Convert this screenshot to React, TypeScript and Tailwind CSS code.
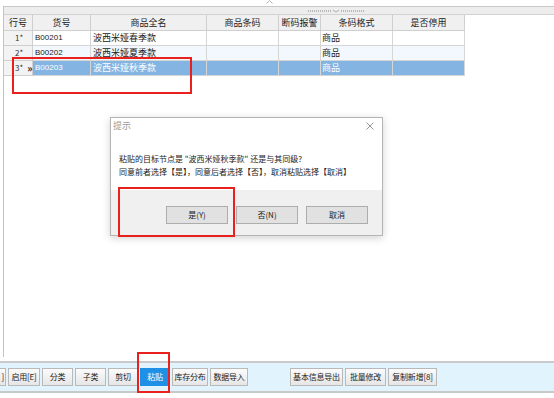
import React from 'react';

const cols = [29, 58, 116, 72, 42, 72, 72];
const headers = ['行号', '货号', '商品全名', '商品条码', '断码报警', '条码格式', '是否停用'];

const rows = [
  { no: '1*', code: 'B00201', name: '波西米娅春季款', fmt: '商品', bg: 'bg-white' },
  { no: '2*', code: 'B00202', name: '波西米娅夏季款', fmt: '商品', bg: 'bg-[#f3f8fe]' },
  { no: '3*', code: 'B00203', name: '波西米娅秋季款', fmt: '商品', bg: 'bg-[#84b4e1]', selected: true },
];

const tools = [
  { label: '启用[E]', w: 'w-[32px]' },
  { label: '分类', w: 'w-[31px]' },
  { label: '子类', w: 'w-[31px]' },
  { label: '剪切', w: 'w-[30px]' },
  { label: '粘贴', w: 'w-[30px]' },
  { label: '库存分布', w: 'w-[36px]' },
  { label: '数据导入', w: 'w-[38px]' },
];
const tools2 = [
  { label: '基本信息导出', w: 'w-[53px]' },
  { label: '批量修改', w: 'w-[41px]' },
  { label: '复制新增[8]', w: 'w-[49px]' },
];

function ToolButton({ label, active, className = '' }: { label: string; active?: boolean; className?: string }) {
  return (
    <div
      className={`h-[18px] flex items-center justify-center border text-[8px] whitespace-nowrap tracking-[-0.2px] ${
        active
          ? 'bg-[#1e90e6] border-[#1e90e6] text-white'
          : 'bg-gradient-to-b from-[#fbfbfb] to-[#e6e6e6] border-[#b9b9b9] text-[#222]'
      } ${className}`}
    >
      {label}
    </div>
  );
}

function DialogButton({ label }: { label: string }) {
  return (
    <div className="w-[62px] h-[18px] flex items-center justify-center bg-[#e1e1e1] border border-[#adadad] text-[8px] text-[#222]">
      {label}
    </div>
  );
}

export default function App() {
  const gridCols = cols.map((c) => `${c}px`).join(' ');
  return (
    <div
      className="relative w-[554px] h-[398px] bg-white overflow-hidden flex flex-col"
      style={{ fontFamily: '"Noto Sans CJK SC", "Liberation Sans", sans-serif' }}
    >
      {/* top strip */}
      <div className="h-[6px] relative">
        <svg className="absolute left-[266px] top-0" width="7" height="4" viewBox="0 0 7 4">
          <path d="M0.5 3.5 L3.5 0.5 L6.5 3.5" fill="none" stroke="#b5b5b5" strokeWidth="1" />
        </svg>
      </div>

      <div className="flex-1 flex flex-col pl-[3px]">
        <div className="flex-1 flex flex-col border-l border-[#c4c4c4]">
          {/* splitter band */}
          <div className="h-[9px] border-t border-[#c8c8c8] bg-[#ededed] border-b border-b-[#d2d2d2] flex items-center justify-center pl-[114px]">
            <svg width="56" height="4" viewBox="0 0 56 4">
              {Array.from({ length: 12 }).map((_, i) => (
                <rect key={'a' + i} x={i * 2} y="1" width="1" height="2" fill="#b8b8b8" />
              ))}
              <path d="M25 1 L28 3 L31 1" fill="none" stroke="#a0a0a0" strokeWidth="0.8" />
              {Array.from({ length: 12 }).map((_, i) => (
                <rect key={'b' + i} x={33 + i * 2} y="1" width="1" height="2" fill="#b8b8b8" />
              ))}
            </svg>
          </div>

          {/* grid */}
          <div className="grid" style={{ gridTemplateColumns: gridCols, width: 462 }}>
            {headers.map((h) => (
              <div
                key={h}
                className="h-[16px] flex items-center justify-center bg-[#f0f0f0] border-r border-b border-[#cfcfcf] text-[9px] text-[#222]"
              >
                {h}
              </div>
            ))}
            {rows.map((r) => (
              <React.Fragment key={r.no}>
                <div className="h-[15px] flex items-center bg-[#f3f3f3] border-r border-b border-[#cfcfcf] text-[8px] text-[#333] pl-[11px]">
                  <span>{r.no}</span>
                  {r.selected && <span className="ml-[4px] text-[10px] font-bold leading-none text-[#222]">»</span>}
                </div>
                <div
                  className={`h-[15px] flex items-center pl-[2px] border-r border-b border-[#d6d6d6] text-[8px] ${r.bg} ${
                    r.selected ? 'text-white' : 'text-[#222]'
                  }`}
                  style={{ fontFamily: '"Liberation Sans", sans-serif' }}
                >
                  {r.code}
                </div>
                <div className={`h-[15px] flex items-center pl-[2px] border-r border-b border-[#d6d6d6] text-[9px] ${r.bg} ${r.selected ? 'text-white' : 'text-[#222]'}`}>
                  {r.name}
                </div>
                <div className={`h-[15px] border-r border-b border-[#d6d6d6] ${r.bg}`} />
                <div className={`h-[15px] border-r border-b border-[#d6d6d6] ${r.bg}`} />
                <div className={`h-[15px] flex items-center pl-[1px] border-r border-b border-[#d6d6d6] text-[9px] ${r.bg} ${r.selected ? 'text-white' : 'text-[#222]'}`}>
                  {r.fmt}
                </div>
                <div className={`h-[15px] border-r border-b border-[#d6d6d6] ${r.bg}`} />
              </React.Fragment>
            ))}
          </div>
          <div className="flex-1" />
        </div>
      </div>

      {/* toolbar */}
      <div className="mt-[4px] h-[32px] bg-[#e1f4fd] border-t-2 border-b-2 border-[#c9c9c9] flex items-center gap-[2px] mb-[5px]">
        <ToolButton label="]" className="w-[6px] border-l-0 justify-end pr-[1px]" />
        {tools.map((t) => (
          <ToolButton key={t.label} label={t.label} active={t.label === '粘贴'} className={t.w} />
        ))}
        <div className="w-[38px]" />
        {tools2.map((t) => (
          <ToolButton key={t.label} label={t.label} className={t.w} />
        ))}
      </div>

      {/* dialog */}
      <div className="absolute left-[110px] top-[117px] w-[273px] h-[119px] bg-white border border-[#b4b4b4] shadow-[0_2px_8px_rgba(0,0,0,0.18)] flex flex-col">
        <div className="h-[16px] flex items-center justify-between pl-[2px] pr-[8px]">
          <span className="text-[9px] text-[#9a9a9a]">提示</span>
          <svg width="8" height="8" viewBox="0 0 8 8">
            <path d="M0.5 0.5 L7.5 7.5 M7.5 0.5 L0.5 7.5" stroke="#8a8a8a" strokeWidth="0.9" />
          </svg>
        </div>
        <div className="flex-1 flex flex-col justify-center pl-[8px] pb-[6px] pt-[12px] text-[8px] leading-[13px] text-[#222]">
          <div>粘贴的目标节点是 "波西米娅秋季款" 还是与其同级?</div>
          <div>同意前者选择【是】，同意后者选择【否】，取消粘贴选择【取消】</div>
        </div>
        <div className="h-[45px] bg-[#f0f0f0] flex items-center justify-end gap-[8px] pr-[14px] pt-[5px]">
          <DialogButton label="是(Y)" />
          <DialogButton label="否(N)" />
          <DialogButton label="取消" />
        </div>
      </div>

      {/* red annotation boxes */}
      <div className="absolute left-[12px] top-[57px] w-[180px] h-[37px] border-2 border-[#e8211d]" />
      <div className="absolute left-[118px] top-[187px] w-[117px] h-[50px] border-2 border-[#e8211d]" />
      <div className="absolute left-[137px] top-[352px] w-[33px] h-[41px] border-2 border-[#e8211d]" />
    </div>
  );
}
